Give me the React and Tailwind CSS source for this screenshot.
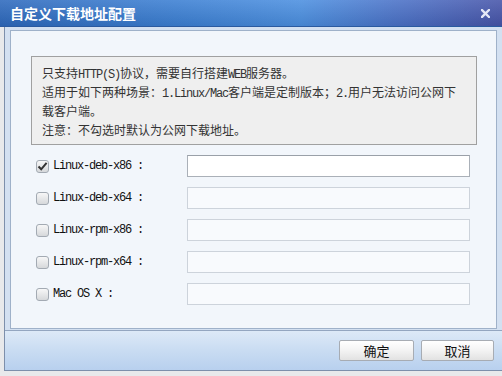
import React from 'react';

const cjk = "'Noto Sans CJK SC', 'Noto Sans', sans-serif";
const mono = "'Liberation Mono', 'Noto Sans CJK SC', monospace";

const L = ({ children }) => (
  <span className="tracking-[-1.2px] leading-none" style={{ fontFamily: mono }}>
    {children}
  </span>
);

const CheckBox = ({ checked }) => (
  <span className="w-[13px] h-[13px] rounded-[3px] border border-[#a3aab3] bg-[linear-gradient(180deg,#f7f7f7,#d6d8db)] flex items-center justify-center shrink-0">
    {checked && (
      <svg width="11" height="11" viewBox="0 0 11 11">
        <path d="M1.5 5.5 L4.2 8.3 L9.6 1.8" fill="none" stroke="#333" strokeWidth="2" />
      </svg>
    )}
  </span>
);

const rows = [
  { label: 'Linux-deb-x86 :', checked: true },
  { label: 'Linux-deb-x64 :', checked: false },
  { label: 'Linux-rpm-x86 :', checked: false },
  { label: 'Linux-rpm-x64 :', checked: false },
  { label: 'Mac OS X :', checked: false },
];

const Button = ({ children }) => (
  <button
    className="h-[21px] rounded-[2px] border border-[#a7acb3] bg-[linear-gradient(180deg,#ffffff_0%,#f3f3f3_50%,#e2e2e2_100%)] text-[13px] text-[#111] leading-none"
    style={{ fontFamily: cjk }}
  >
    {children}
  </button>
);

const Line = ({ children }) => (
  <div className="h-[19px] leading-[19px] overflow-hidden">{children}</div>
);

export default function App() {
  return (
    <div className="w-[502px] h-[376px] bg-[#e8e9eb] flex flex-col overflow-hidden" style={{ fontFamily: cjk }}>
      <div className="h-[27px] shrink-0 relative bg-[linear-gradient(90deg,#2d69bd_0%,#3b7fd3_35%,#4b8fe0_60%,#4a70c6_80%,#4654a9_100%)] border-b border-[#2a5aa0]">
        <div className="absolute inset-0 bg-[linear-gradient(180deg,rgba(255,255,255,0.12),rgba(0,0,0,0.08))]" />
        <div className="relative h-full flex items-center justify-between pl-[10px] pr-[12px]">
          <span className="text-white text-[14px] font-bold leading-none">自定义下载地址配置</span>
          <svg width="9" height="9" viewBox="0 0 9 9">
            <path d="M1 1 L8 8 M8 1 L1 8" stroke="#e3e7f6" strokeWidth="2.4" strokeLinecap="square" />
          </svg>
        </div>
      </div>

      <div className="ml-[4px] h-[344px] border-l border-b border-[#7d8fab] bg-[#d3e0f1] flex flex-col">
        <div className="pt-[3px] pl-[5px] pr-[5px]">
          <div className="h-[299px] border border-[#9fb1c9] bg-[#f2f6fb] flex flex-col">
            <div className="mt-[25px] ml-[20px] mr-[19px] h-[89px] border border-[#a0a0a0] bg-[#efefef] pt-[6px] pl-[10px] text-[12px] text-[#333] whitespace-nowrap">
              <Line>只支持<L>HTTP(S)</L>协议，需要自行搭建<L>WEB</L>服务器。</Line>
              <Line>
                适用于如下两种场景：<L>1.Linux/Mac</L>客户端是定制版本；<L>2.</L>用户无法访问公网下
              </Line>
              <Line>载客户端。</Line>
              <Line>注意：不勾选时默认为公网下载地址。</Line>
            </div>

            <div className="mt-[10px] flex flex-col gap-[10px]">
              {rows.map((r) => (
                <div key={r.label} className="h-[22px] flex items-center">
                  <div className="w-[176px] pl-[25px] flex items-center gap-[4px]">
                    <CheckBox checked={r.checked} />
                    <span className="text-[12px] text-[#111] tracking-[-1.2px]" style={{ fontFamily: mono }}>
                      {r.label}
                    </span>
                  </div>
                  <input
                    className={`w-[283px] h-[22px] border outline-none ${
                      r.checked
                        ? 'bg-white border-[#aab0b8] border-t-[#9aa0a8]'
                        : 'bg-[#f8fafd] border-[#cdd3db]'
                    }`}
                  />
                </div>
              ))}
            </div>
          </div>
        </div>

        <div className="mt-[1px] h-[40px] border-t border-[#94a6c0] bg-[linear-gradient(180deg,#dde9f7_0%,#c9dcf2_50%,#b8d0ee_100%)] flex items-center justify-end gap-[7px] pr-[8px]">
          <div className="w-[75px] flex flex-col">
            <Button>确定</Button>
          </div>
          <div className="w-[73px] flex flex-col">
            <Button>取消</Button>
          </div>
        </div>
      </div>
    </div>
  );
}
